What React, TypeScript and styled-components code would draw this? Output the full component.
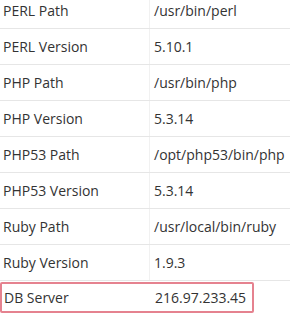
import React from "react";
import styled, { createGlobalStyle } from "styled-components";

const Global = createGlobalStyle`
  html, body { margin: 0; padding: 0; background: #ffffff; }
  body { font-family: "Open Sans", "DejaVu Sans", sans-serif; overflow: hidden; }
`;

const Table = styled.div`
  width: 290px;
  margin-top: -8px;
  display: flex;
  flex-direction: column;
  color: #333333;
  font-size: 14px;
`;

const Row = styled.div`
  height: 35px;
  border-top: 1px solid #e6e6e6;
  display: flex;
  align-items: center;
`;

const Cells = styled.div<{ $highlight?: boolean }>`
  display: grid;
  grid-template-columns: 150px 1fr;
  height: ${(p) => (p.$highlight ? "31px" : "100%")};
  width: ${(p) => (p.$highlight ? "254px" : "100%")};
  box-sizing: border-box;
  border: ${(p) => (p.$highlight ? "2px solid #e5828f" : "none")};
  border-radius: ${(p) => (p.$highlight ? "2px" : "0")};
  margin-top: ${(p) => (p.$highlight ? "1px" : "0")};
  align-self: ${(p) => (p.$highlight ? "flex-start" : "stretch")};
`;

const Label = styled.div<{ $highlight?: boolean }>`
  display: flex;
  align-items: center;
  padding-left: ${(p) => (p.$highlight ? "2px" : "3px")};
  border-right: 1px solid ${(p) => (p.$highlight ? "transparent" : "#f1f1f1")};
`;

const Value = styled.div<{ $highlight?: boolean }>`
  display: flex;
  align-items: center;
  padding-left: ${(p) => (p.$highlight ? "3px" : "4px")};
`;

const rows: [string, string][] = [
  ["PERL Path", "/usr/bin/perl"],
  ["PERL Version", "5.10.1"],
  ["PHP Path", "/usr/bin/php"],
  ["PHP Version", "5.3.14"],
  ["PHP53 Path", "/opt/php53/bin/php"],
  ["PHP53 Version", "5.3.14"],
  ["Ruby Path", "/usr/local/bin/ruby"],
  ["Ruby Version", "1.9.3"],
  ["DB Server", "216.97.233.45"],
];

export default function App() {
  return (
    <>
      <Global />
      <Table>
        {rows.map(([k, v]) => {
          const hl = k === "DB Server";
          return (
            <Row key={k}>
              <Cells $highlight={hl}>
                <Label $highlight={hl}>{k}</Label>
                <Value $highlight={hl}>{v}</Value>
              </Cells>
            </Row>
          );
        })}
      </Table>
    </>
  );
}
